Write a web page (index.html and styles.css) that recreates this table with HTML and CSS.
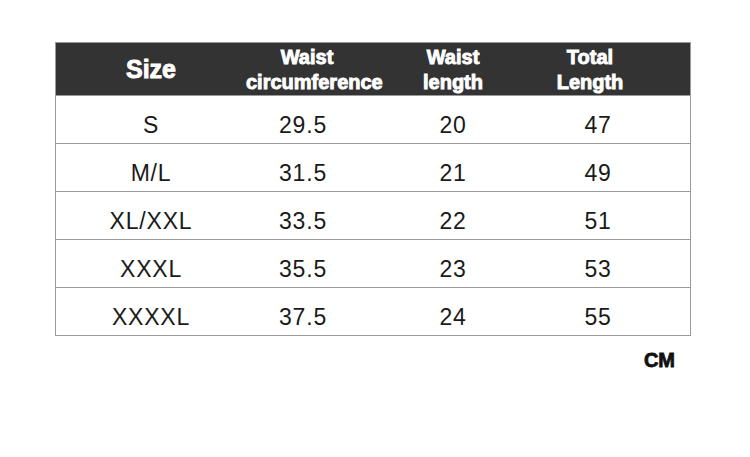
FILE: index.html
```html
<!DOCTYPE html>
<html>
<head>
<meta charset="utf-8">
<link rel="stylesheet" href="styles.css">
</head>
<body>
<div class="page">
  <div class="table">
    <div class="row head">
      <div class="cell size-h">Size</div>
      <div class="cell">Waist<br>circumference</div>
      <div class="cell">Waist<br>length</div>
      <div class="cell total-h">Total<br>Length</div>
    </div>
    <div class="row"><div class="cell">S</div><div class="cell c2">29.5</div><div class="cell">20</div><div class="cell">47</div></div>
    <div class="row"><div class="cell">M/L</div><div class="cell c2">31.5</div><div class="cell">21</div><div class="cell">49</div></div>
    <div class="row"><div class="cell">XL/XXL</div><div class="cell c2">33.5</div><div class="cell">22</div><div class="cell">51</div></div>
    <div class="row"><div class="cell">XXXL</div><div class="cell c2">35.5</div><div class="cell">23</div><div class="cell">53</div></div>
    <div class="row"><div class="cell">XXXXL</div><div class="cell c2">37.5</div><div class="cell">24</div><div class="cell">55</div></div>
  </div>
  <div class="unit">CM</div>
</div>
</body>
</html>
```
FILE: styles.css
```css
html, body { margin: 0; padding: 0; background: #fff; }
.page { width: 750px; height: 457px; padding: 42px 0 0 55px; box-sizing: border-box; }
.table { width: 636px; border: 1px solid #9a9a9a; border-top: none; box-sizing: border-box; }
.row {
  display: grid;
  grid-template-columns: 190px 122px 170px 120px 1fr;
  height: 48px;
  align-items: center;
  border-top: 1px solid #9a9a9a;
  box-sizing: border-box;
  padding-top: 11px;
  font-family: "Liberation Sans", Arial, sans-serif;
  font-size: 23px;
  letter-spacing: 0.8px;
  color: #1a1a1a;
}
.cell { text-align: center; white-space: nowrap; }
.c2 { margin-right: 8px; }
.head {
  height: 53px;
  padding-top: 1px;
  background: #333;
  color: #fff;
  font-weight: bold;
  font-size: 20px;
  line-height: 25px;
  letter-spacing: 0;
  -webkit-text-stroke: 0.9px #fff;
  border-top: 1px solid #9a9a9a;
}
.size-h { font-size: 25px; }
.total-h { margin-right: 16px; }
.unit {
  width: 620px;
  text-align: right;
  margin-top: 13px;
  font-family: "Liberation Sans Narrow", "Liberation Sans", Arial, sans-serif;
  font-weight: bold;
  font-size: 20px;
  -webkit-text-stroke: 0.8px #111;
  color: #111;
}
```
